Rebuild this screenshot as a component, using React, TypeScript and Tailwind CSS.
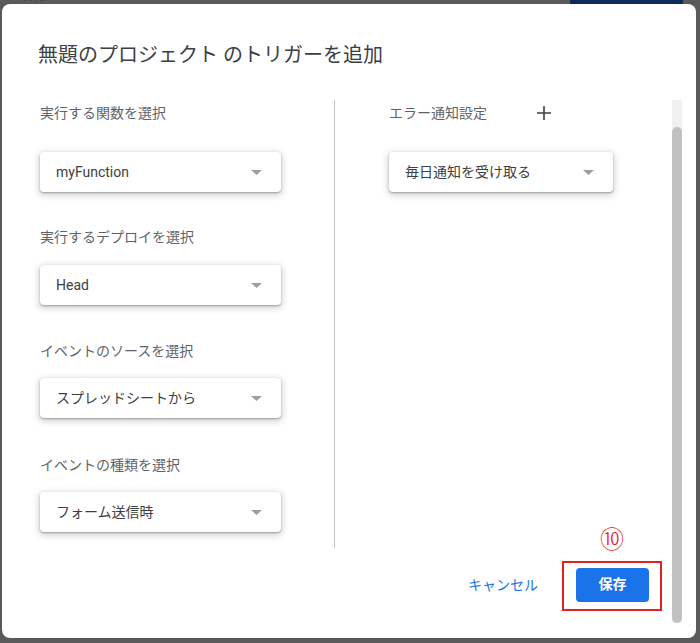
import React from "react";

const Select = ({ value, width }: { value: string; width: string }) => (
  <div
    className={`flex h-10 items-center justify-between rounded bg-white pl-4 pr-[19px] text-[14px] text-[#3c4043] shadow-[0_1px_2px_rgba(0,0,0,0.3),0_2px_6px_2px_rgba(0,0,0,0.15)] ${width}`}
  >
    <span>{value}</span>
    <svg width="11" height="5" viewBox="0 0 11 5">
      <path d="M0 0h11L5.5 5z" fill="#9e9e9e" />
    </svg>
  </div>
);

const Label = ({ text, className }: { text: string; className: string }) => (
  <div className={`h-5 text-[14px] leading-5 text-[#5f6368] ${className}`}>{text}</div>
);

const App = () => {
  return (
    <div className="relative h-[643px] w-[700px] overflow-hidden bg-[#5a5a5a] font-['Roboto','Noto_Sans_CJK_JP',sans-serif]">
      {/* page behind the overlay */}
      <div className="flex items-end justify-between pl-[22px] pr-[17px]">
        <div className="-mt-[24px] text-[22px] leading-[30px] text-[#1f1f1f]">無題のプロジェクト</div>
        <div className="-mt-[20px] h-[24px] w-[113px] rounded bg-[#0b2c5a]" />
      </div>

      <div className="absolute left-[2px] top-[4px] flex h-[634px] w-[694px] flex-col rounded-lg bg-white">
        <div className="h-[96px] pl-[36px] pt-[37px] text-[20px] leading-[28px] text-[#3c4043]">
          無題のプロジェクト のトリガーを追加
        </div>

        <div className="flex h-[523px]">
          <div className="flex w-[670px] flex-col">
            <div className="flex h-[448px]">
              <div className="flex w-[333px] flex-col border-r border-[#c4c4c4] pl-[38px]">
                <Label text="実行する関数を選択" className="mt-[3px]" />
                <div className="mt-[29px]">
                  <Select value="myFunction" width="w-[241px]" />
                </div>
                <Label text="実行するデプロイを選択" className="mt-[35px]" />
                <div className="mt-[18px]">
                  <Select value="Head" width="w-[241px]" />
                </div>
                <Label text="イベントのソースを選択" className="mt-[36px]" />
                <div className="mt-[17px]">
                  <Select value="スプレッドシートから" width="w-[241px]" />
                </div>
                <Label text="イベントの種類を選択" className="mt-[37px]" />
                <div className="mt-[17px]">
                  <Select value="フォーム送信時" width="w-[241px]" />
                </div>
              </div>

              <div className="flex flex-col pl-[54px]">
                <div className="mt-[3px] flex h-5 items-center gap-[50px]">
                  <span className="text-[14px] leading-5 text-[#5f6368]">エラー通知設定</span>
                  <svg width="14" height="14" viewBox="0 0 14 14">
                    <path d="M7 0v14M0 7h14" stroke="#3c4043" strokeWidth="1.6" />
                  </svg>
                </div>
                <div className="mt-[29px]">
                  <Select value="毎日通知を受け取る" width="w-[224px]" />
                </div>
              </div>
            </div>

            <div className="flex h-[75px] items-center justify-end gap-[24px] pr-[10px]">
              <button className="text-[14px] text-[#1a73e8]">キャンセル</button>
              <div className="relative border-2 border-[#e3211c] pb-[7px] pl-[12px] pr-[11px] pt-[5px]">
                <span className="absolute -top-[37px] left-0 right-0 text-center text-[24px] font-light leading-7 text-[#e3211c]">
                  ⑩
                </span>
                <button className="h-[34px] w-[73px] rounded bg-[#1a73e8] text-[14px] font-bold text-white">
                  保存
                </button>
              </div>
            </div>
          </div>

          <div className="flex w-[10px] flex-col bg-[#f1f1f1] pt-[27px]">
            <div className="flex-1 rounded-full bg-[#c1c1c1]" />
          </div>
        </div>
      </div>
    </div>
  );
};

export default App;
